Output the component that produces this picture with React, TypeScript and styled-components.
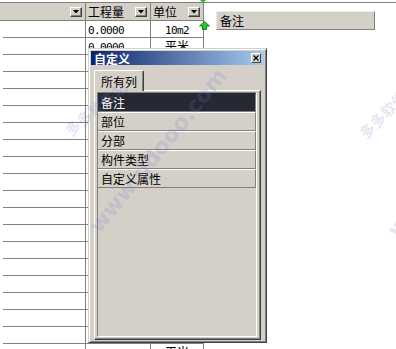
import React from 'react';
import styled, { createGlobalStyle } from 'styled-components';

const GlobalStyle = createGlobalStyle`
  html, body {
    margin: 0;
    padding: 0;
    background: #fff;
  }
  body {
    width: 396px;
    height: 349px;
    overflow: hidden;
    font-family: "Noto Sans CJK SC", "Liberation Sans", sans-serif;
    font-size: 12px;
    color: #000;
  }
`;

const FACE = '#d4d0c8';
const SHADOW = '#808080';
const DARK = '#404040';

const rows = Array.from({ length: 21 }, (_, i) => ({
	qty: '0.0000',
	unit: i === 0 ? '10m2' : '平米'
}));

const fields = ['备注', '部位', '分部', '构件类型', '自定义属性'];

function DropArrow() {
	return (
		<svg width="6" height="4" viewBox="0 0 6 4">
			<polygon points="0,0 6,0 3,3.5" fill="#000" />
		</svg>
	);
}

function App() {
	return (
		<Page>
			<GlobalStyle />
			<Sheet>
				<HeaderCell $bordered>
					<span />
					<DropButton>
						<DropArrow />
					</DropButton>
				</HeaderCell>
				<HeaderCell $bordered>
					<span>工程量</span>
					<DropButton>
						<DropArrow />
					</DropButton>
				</HeaderCell>
				<HeaderCell $bordered>
					<span>单位</span>
					<DropButton>
						<DropArrow />
					</DropButton>
				</HeaderCell>
				<HeaderCell />

				{rows.map((row, index) => (
					<React.Fragment key={index}>
						<LeftCell>
							<LeftRule />
						</LeftCell>
						<QtyCell>{row.qty}</QtyCell>
						<UnitCell $cjk={row.unit === '平米'}>{row.unit}</UnitCell>
						<EmptyCell />
					</React.Fragment>
				))}
			</Sheet>

			<TopMarker width="6" height="3" viewBox="0 0 6 3">
				<polygon points="0,0 6,0 3,3" fill="#22c022" />
			</TopMarker>
			<InsertArrow width="11" height="9" viewBox="0 0 11 9">
				<polygon
					points="5.5,0.5 10.5,5 7.5,5 7.5,8.5 3.5,8.5 3.5,5 0.5,5"
					fill="#20d020"
					stroke="#0b5e0b"
					strokeWidth="0.8"
				/>
			</InsertArrow>

			<DragLabel>备注</DragLabel>

			<Watermark $x={60} $y={124} $angle={-40}>多多软件站</Watermark>
			<Watermark $x={354} $y={128} $angle={-45}>多多软件站</Watermark>
			<Watermark $x={84} $y={222} $angle={-51} $wide>www.ddooo.com</Watermark>
			<Watermark $x={382} $y={226} $angle={-50} $wide>www.ddooo.com</Watermark>

			<Dialog>
				<TitleBar>
					<TitleText>自定义</TitleText>
					<CloseButton>
						<svg width="6" height="6" viewBox="0 0 6 6">
							<path d="M0.5 0.5 L5.5 5.5 M5.5 0.5 L0.5 5.5" stroke="#000" strokeWidth="1.2" />
						</svg>
					</CloseButton>
				</TitleBar>
				<DialogBody>
					<TabStrip>
						<Tab>所有列</Tab>
					</TabStrip>
					<TabPanel>
						<FieldList>
							{fields.map((field, index) => (
								<FieldRow key={field} $selected={index === 0}>
									{field}
								</FieldRow>
							))}
						</FieldList>
					</TabPanel>
				</DialogBody>
			</Dialog>
		</Page>
	);
}

const Page = styled.div`
	position: relative;
	width: 396px;
	height: 349px;
	overflow: hidden;
	background: #fff;
`;

const Sheet = styled.div`
	margin-top: 2px;
	border-top: 1px solid ${SHADOW};
	display: grid;
	grid-template-columns: 86px 65px 53px 1fr;
	grid-auto-rows: 17px;
	grid-template-rows: 18px;
`;

const HeaderCell = styled.div<{ $bordered?: boolean }>`
	box-sizing: border-box;
	height: 18px;
	display: flex;
	align-items: center;
	justify-content: space-between;
	padding: 0 3px 0 2px;
	background: ${(props) => (props.$bordered ? FACE : '#fff')};
	border-right: ${(props) => (props.$bordered ? `1px solid ${SHADOW}` : 'none')};
	border-bottom: ${(props) => (props.$bordered ? `1px solid ${SHADOW}` : 'none')};
	font-size: 12px;
	line-height: 14px;

	span {
		padding-top: 1px;
	}
`;

const DropButton = styled.div`
	box-sizing: border-box;
	width: 12px;
	height: 10px;
	margin-top: 1px;
	display: flex;
	align-items: center;
	justify-content: center;
	background: ${FACE};
	border: 1px solid;
	border-color: #fff ${DARK} ${DARK} #fff;
	box-shadow: inset -1px -1px ${SHADOW};
`;

const LeftCell = styled.div`
	box-sizing: border-box;
	padding-left: 3px;
	border-right: 1px solid ${SHADOW};
`;

const LeftRule = styled.div`
	box-sizing: border-box;
	height: 100%;
	border-bottom: 1px solid ${SHADOW};
`;

const QtyCell = styled.div`
	box-sizing: border-box;
	padding: 3px 0 0 2px;
	border-right: 1px solid ${SHADOW};
	border-bottom: 1px solid ${SHADOW};
	font-family: "DejaVu Sans Mono", "Liberation Mono", monospace;
	font-size: 11px;
	letter-spacing: -0.6px;
	line-height: 13px;
`;

const UnitCell = styled.div<{ $cjk: boolean }>`
	box-sizing: border-box;
	padding-top: ${(props) => (props.$cjk ? '0' : '3px')};
	text-align: center;
	border-right: 1px solid ${SHADOW};
	border-bottom: 1px solid ${SHADOW};
	font-family: ${(props) =>
		props.$cjk
			? '"Noto Sans CJK SC", sans-serif'
			: '"DejaVu Sans Mono", "Liberation Mono", monospace'};
	font-size: ${(props) => (props.$cjk ? '12px' : '11px')};
	letter-spacing: ${(props) => (props.$cjk ? '0' : '-0.6px')};
	line-height: ${(props) => (props.$cjk ? '16px' : '13px')};
`;

const EmptyCell = styled.div``;

const TopMarker = styled.svg`
	position: absolute;
	left: 200px;
	top: 0;
`;

const InsertArrow = styled.svg`
	position: absolute;
	left: 199px;
	top: 21px;
`;

const DragLabel = styled.div`
	position: absolute;
	left: 216px;
	top: 11px;
	box-sizing: border-box;
	width: 159px;
	height: 19px;
	padding-left: 3px;
	display: flex;
	align-items: center;
	background: ${FACE};
	border: 1px solid;
	border-color: #ebe9e4 ${SHADOW} ${SHADOW} #ebe9e4;
	font-size: 12px;
`;

const Watermark = styled.span<{ $x: number; $y: number; $angle: number; $wide?: boolean }>`
	position: absolute;
	left: ${(props) => props.$x}px;
	top: ${(props) => props.$y}px;
	transform: rotate(${(props) => props.$angle}deg);
	transform-origin: left top;
	color: rgba(120, 120, 200, 0.2);
	font-family: ${(props) =>
		props.$wide ? '"DejaVu Sans", sans-serif' : '"Noto Sans CJK SC", sans-serif'};
	font-size: ${(props) => (props.$wide ? '22px' : '15px')};
	font-weight: bold;
	white-space: nowrap;
	pointer-events: none;
	z-index: 3;
`;

const Dialog = styled.div`
	position: absolute;
	left: 88px;
	top: 48px;
	box-sizing: border-box;
	width: 179px;
	height: 295px;
	padding: 2px;
	display: flex;
	flex-direction: column;
	background: ${FACE};
	border: 1px solid;
	border-color: ${FACE} ${DARK} ${DARK} ${FACE};
	box-shadow: inset 1px 1px #fff, inset -1px -1px ${SHADOW};
	z-index: 2;
`;

const TitleBar = styled.div`
	height: 14px;
	flex-shrink: 0;
	padding: 0 3px;
	display: flex;
	align-items: center;
	justify-content: space-between;
	background: linear-gradient(to right, #0a246a, #a6caf0);
`;

const TitleText = styled.span`
	color: #fff;
	font-weight: bold;
	font-size: 12px;
	line-height: 14px;
	padding-top: 1px;
`;

const CloseButton = styled.div`
	box-sizing: border-box;
	width: 10px;
	height: 10px;
	display: flex;
	align-items: center;
	justify-content: center;
	background: ${FACE};
	border: 1px solid;
	border-color: #fff ${DARK} ${DARK} #fff;
`;

const DialogBody = styled.div`
	flex: 1;
	padding: 5px 3px 0 3px;
	display: flex;
	flex-direction: column;
`;

const TabStrip = styled.div`
	display: flex;
	position: relative;
	z-index: 1;
	margin-bottom: -1px;
`;

const Tab = styled.div`
	box-sizing: border-box;
	width: 50px;
	height: 21px;
	padding-left: 6px;
	display: flex;
	align-items: center;
	background: ${FACE};
	border-top: 1px solid #fff;
	border-left: 1px solid #fff;
	border-right: 1px solid ${DARK};
	box-shadow: inset -1px 0 ${SHADOW};
	border-radius: 2px 2px 0 0;
	font-size: 12px;
`;

const TabPanel = styled.div`
	flex: 1;
	display: flex;
	padding: 1px 3px 2px 2px;
	border: 1px solid;
	border-color: #fff ${DARK} ${DARK} #fff;
	box-shadow: inset -1px -1px ${SHADOW};
`;

const FieldList = styled.div`
	flex: 1;
	display: flex;
	flex-direction: column;
	background: ${FACE};
	border: 1px solid;
	border-color: ${SHADOW} #fff #fff ${SHADOW};
`;

const FieldRow = styled.div<{ $selected: boolean }>`
	box-sizing: border-box;
	height: 19px;
	padding-left: 3px;
	display: flex;
	align-items: center;
	font-size: 12px;
	background: ${(props) => (props.$selected ? '#262934' : FACE)};
	color: ${(props) => (props.$selected ? '#fff' : '#000')};
	border-top: 1px solid ${(props) => (props.$selected ? '#262934' : '#fff')};
	border-bottom: 1px solid ${SHADOW};
	border-right: 1px solid ${SHADOW};
`;

export default App;
